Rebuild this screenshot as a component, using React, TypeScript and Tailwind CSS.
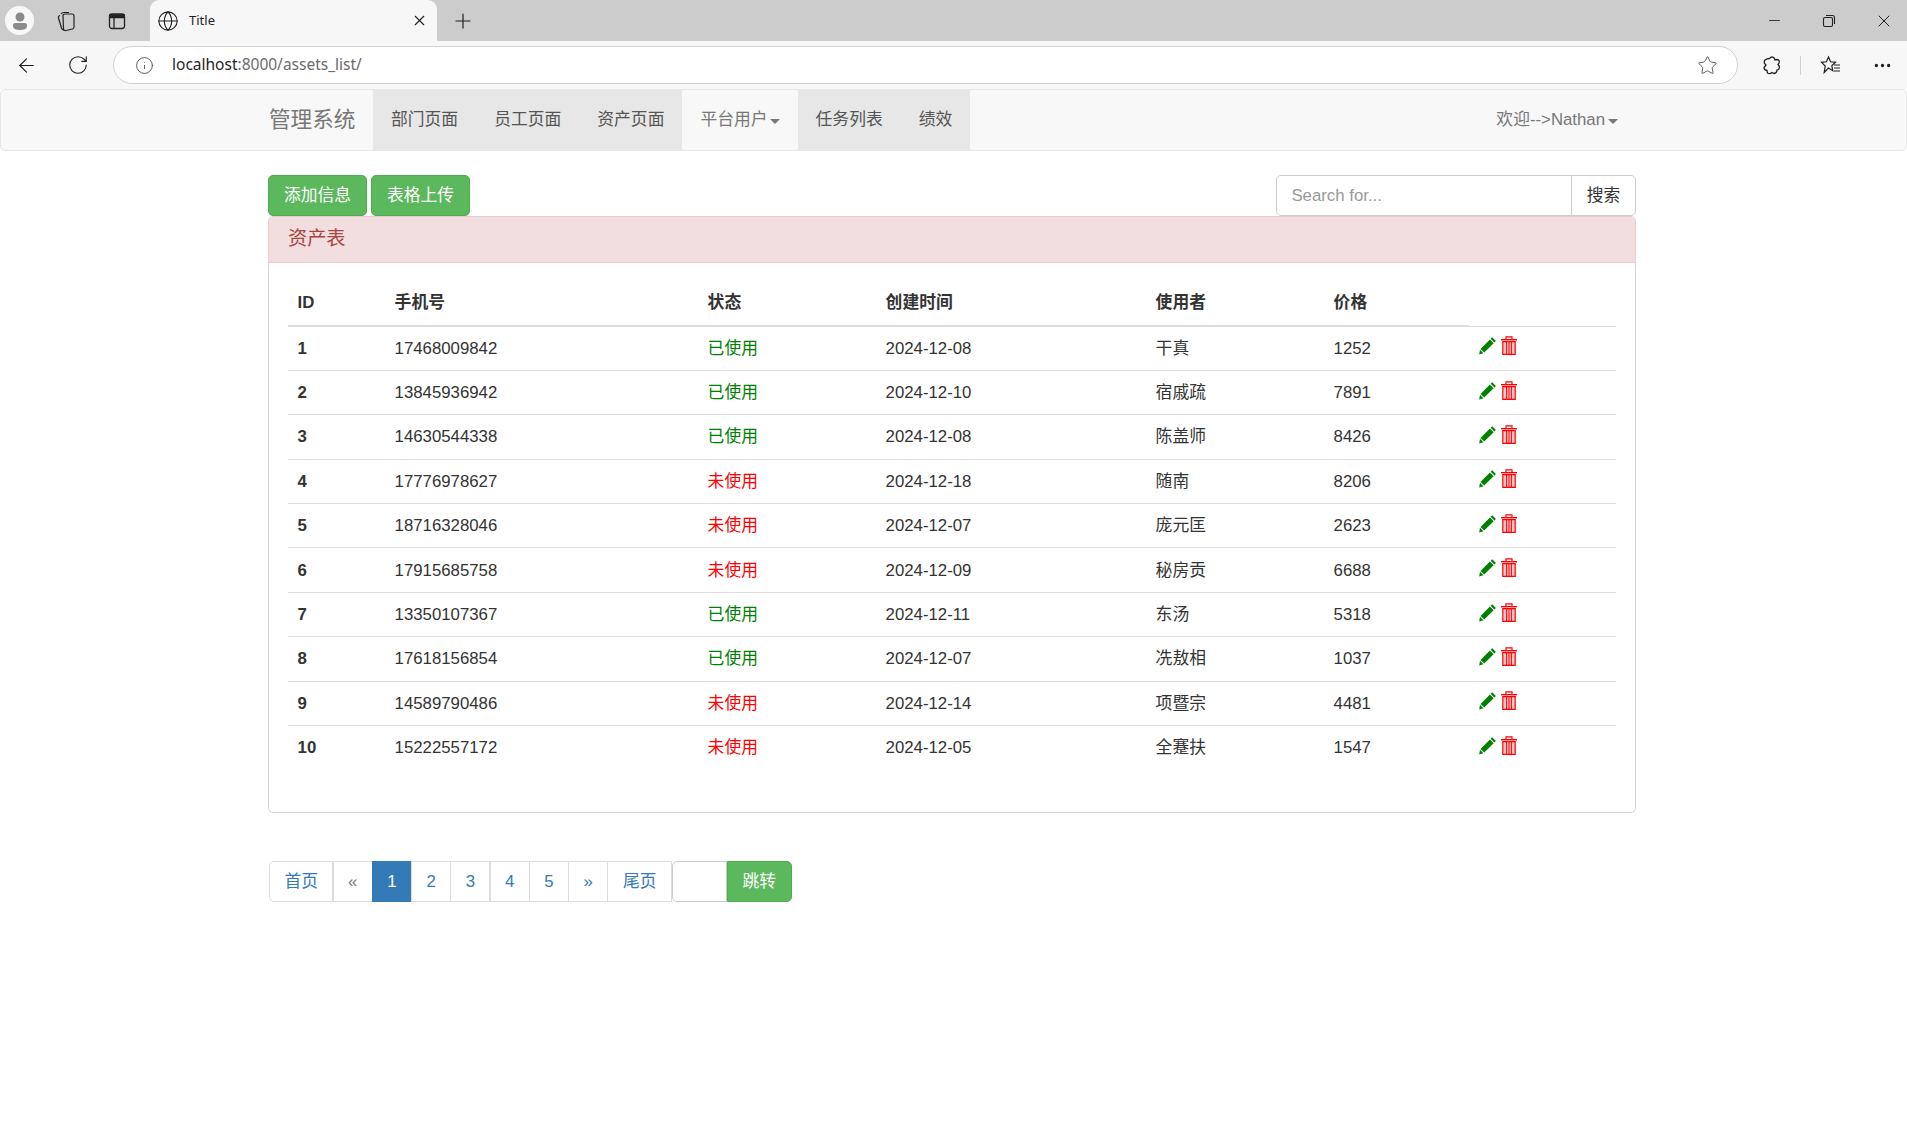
import React from 'react';
import { ArrowLeft, RotateCw, Info, Star, Plus, X, Minus, Globe, Ellipsis } from 'lucide-react';

const rows = [
  { id: 1, phone: '17468009842', used: true, date: '2024-12-08', user: '干真', price: 1252 },
  { id: 2, phone: '13845936942', used: true, date: '2024-12-10', user: '宿戚疏', price: 7891 },
  { id: 3, phone: '14630544338', used: true, date: '2024-12-08', user: '陈盖师', price: 8426 },
  { id: 4, phone: '17776978627', used: false, date: '2024-12-18', user: '随南', price: 8206 },
  { id: 5, phone: '18716328046', used: false, date: '2024-12-07', user: '庞元匡', price: 2623 },
  { id: 6, phone: '17915685758', used: false, date: '2024-12-09', user: '秘房贡', price: 6688 },
  { id: 7, phone: '13350107367', used: true, date: '2024-12-11', user: '东汤', price: 5318 },
  { id: 8, phone: '17618156854', used: true, date: '2024-12-07', user: '冼敖相', price: 1037 },
  { id: 9, phone: '14589790486', used: false, date: '2024-12-14', user: '项暨宗', price: 4481 },
  { id: 10, phone: '15222557172', used: false, date: '2024-12-05', user: '全蹇扶', price: 1547 },
];

function PencilIcon() {
  return (
    <svg width="18" height="19" viewBox="0 0 18 19" className="text-[#008000]">
      <path d="M13.2 1.2 L16.9 4.9 L15.4 6.4 L11.7 2.7 Z" fill="currentColor" />
      <path d="M10.9 3.5 L14.6 7.2 L5.2 16.6 L1.5 12.9 Z" fill="currentColor" />
      <path d="M1 13.8 L4.4 17.2 L0.2 18.4 Z" fill="currentColor" />
    </svg>
  );
}

function TrashIcon() {
  return (
    <svg width="16" height="19" viewBox="0 0 16 19" className="text-[#ff0000]">
      <path d="M5 3.5 V0.8 H11 V3.5" fill="none" stroke="currentColor" strokeWidth="1.2" />
      <rect x="0" y="3" width="16" height="1.4" fill="currentColor" />
      <path d="M1.8 5.6 H14.2 V18.4 H1.8 Z" fill="#ffc4c4" stroke="currentColor" strokeWidth="1.2" />
      <path d="M5.6 6 V18 M8 6 V18 M10.4 6 V18" stroke="currentColor" strokeWidth="1" />
    </svg>
  );
}

function BrowserBar() {
  return (
    <div className="font-['Noto_Sans',sans-serif]">
      <div className="flex h-[41px] items-center bg-[#cccccc] text-[#1f1f1f]">
        <div className="ml-[5px] flex h-[29px] w-[29px] items-center justify-center rounded-full bg-[#f7f7f7]">
          <svg width="18" height="20" viewBox="0 0 18 20">
            <circle cx="9" cy="6" r="4.5" fill="#8a8a8a" />
            <path d="M2 14 Q2 12 4.5 12 H13.5 Q16 12 16 14 V15 Q16 19 9 19 Q2 19 2 15 Z" fill="#8a8a8a" />
          </svg>
        </div>
        <svg width="22" height="22" viewBox="0 0 22 22" className="ml-[21px]" fill="none" stroke="#222" strokeWidth="1.2">
          <path d="M9 20 Q7 20 6.5 18 L3.5 8 Q3 6 5 5.5" />
          <path d="M6 4 Q7 2.5 9 2.5 H14" />
          <path d="M8 6 Q8 4 10 4 H17 Q19 4 19 6 V17 Q19 18.5 17.5 19 L11 20.5 Q8.5 21 8.5 18.5 Z" />
        </svg>
        <svg width="20" height="20" viewBox="0 0 20 20" className="ml-[30px]" fill="none" stroke="#222" strokeWidth="1.3">
          <rect x="2.5" y="3" width="15" height="14.5" rx="2.5" />
          <path d="M3 3.8 H17 V6.5 H3 Z" fill="#222" />
          <path d="M7 6.5 V17" />
        </svg>
        <div className="ml-[23px] flex h-[41px] w-[287px] items-center self-end rounded-t-[9px] bg-[#f7f7f7] pl-[7px] pr-[9px]">
          <Globe size={22} strokeWidth={1.2} />
          <span className="ml-[10px] flex-1 text-[13px]">Title</span>
          <X size={17} strokeWidth={1.5} />
        </div>
        <Plus size={24} strokeWidth={1.2} className="ml-[14px]" />
        <div className="ml-auto flex items-center">
          <Minus size={17} strokeWidth={1.2} className="mr-[39px]" />
          <svg width="14" height="14" viewBox="0 0 14 14" fill="none" stroke="#222" strokeWidth="1.1" className="mr-[38px]">
            <rect x="1.5" y="3.5" width="9" height="9" rx="1.5" />
            <path d="M4 1.5 H10.5 Q12.5 1.5 12.5 3.5 V10" />
          </svg>
          <X size={20} strokeWidth={1.2} className="mr-[13px]" />
        </div>
      </div>
      <div className="flex h-[48px] items-center bg-[#f7f7f7] text-[#1f1f1f]">
        <ArrowLeft size={23} strokeWidth={1.2} className="ml-[15px]" />
        <RotateCw size={22} strokeWidth={1.2} className="ml-[29px]" />
        <div className="ml-[24px] flex h-[38px] w-[1625px] items-center rounded-full border border-[#d2d2d2] bg-white pl-[21px] pr-[19px]">
          <Info size={19} strokeWidth={1.1} className="text-[#444]" />
          <span className="ml-[18px] flex-1 text-[15.5px]">
            localhost<span className="text-[#6b6b6b]">:8000/assets_list/</span>
          </span>
          <Star size={21} strokeWidth={1.1} className="text-[#555]" />
        </div>
        <svg width="20" height="20" viewBox="0 0 20 20" className="ml-[24px]" fill="none" stroke="#222" strokeWidth="1.3">
          <path d="M7.5 3.5 Q10 0.5 12.5 3.5 L13 5 L15 4.5 Q18 5 17 8 L16 9.5 Q18.5 12 16.5 14.5 L15 15 Q15 18 12 18.5 L10 17.5 Q8 19.5 5.5 18 L5 15.5 Q2 15 2 12.5 L4 10 Q1 7.5 3 5 Q5 3.5 7.5 3.5 Z" />
        </svg>
        <div className="ml-[18px] h-[19px] w-px bg-[#cfcfcf]" />
        <svg width="22" height="20" viewBox="0 0 22 20" className="ml-[19px]" fill="none" stroke="#222" strokeWidth="1.2">
          <path d="M8.5 2 L10.6 6.8 L15.5 7.3 L11.8 10.7 L12.8 15.7 L8.5 13 L4.2 17.5 L5.2 11 L1.5 7.3 L6.4 6.8 Z" />
          <path d="M14 10 H20 M14 13 H20 M14 16 H20" />
        </svg>
        <Ellipsis size={21} strokeWidth={1.8} className="ml-[30px]" />
      </div>
    </div>
  );
}

function App() {
  const navItem = 'flex items-center bg-[#e7e7e7] px-[18px]';
  const pageItem = 'flex items-center -ml-[0.85px] border-[1.2px] border-[#ddd] bg-white px-[14.4px] text-[#337ab7]';

  return (
    <div className="min-h-[1137px] overflow-hidden bg-white font-['Liberation_Sans','Noto_Sans_CJK_SC',sans-serif] text-[16.8px] text-[#333]">
      <BrowserBar />

      <div className="h-[62px] rounded-[5px] border-[1.2px] border-[#e7e7e7] bg-[#f8f8f8] text-[#555]">
        <div className="ml-[268px] flex h-full w-[1368px]">
          <div className="flex w-[104px] items-center text-[21.6px] text-[#777]">管理系统</div>
          <div className={navItem}>部门页面</div>
          <div className={navItem}>员工页面</div>
          <div className={navItem}>资产页面</div>
          <div className="flex items-center px-[18px] text-[#777]">
            平台用户
            <span className="ml-[2px] mt-[2px] border-x-[5px] border-t-[5px] border-x-transparent border-t-[#777]" />
          </div>
          <div className={navItem}>任务列表</div>
          <div className={navItem}>绩效</div>
          <div className="ml-auto flex items-center pr-[19px] text-[#777]">
            欢迎--&gt;Nathan
            <span className="ml-[3px] mt-[2px] border-x-[5px] border-t-[5px] border-x-transparent border-t-[#777]" />
          </div>
        </div>
      </div>

      <div className="ml-[268px] w-[1368px]">
        <div className="mt-[24px] flex h-[41px] items-stretch">
          <button className="w-[99px] rounded-[5px] border-[1.2px] border-[#4cae4c] bg-[#5cb85c] text-white">添加信息</button>
          <button className="ml-[4px] w-[99px] rounded-[5px] border-[1.2px] border-[#4cae4c] bg-[#5cb85c] text-white">表格上传</button>
          <div className="ml-auto flex w-[360px]">
            <input
              placeholder="Search for..."
              className="w-[296px] rounded-l-[5px] border-[1.2px] border-[#ccc] px-[14.4px] outline-none placeholder:text-[#999]"
            />
            <button className="-ml-px flex-1 rounded-r-[5px] border-[1.2px] border-[#ccc] bg-white">搜索</button>
          </div>
        </div>

        <div className="rounded-[5px] border-[1.2px] border-[#ebccd1]">
          <div className="flex h-[46px] items-center rounded-t-[4px] border-b-[1.2px] border-[#ebccd1] bg-[#f2dede] px-[19px] text-[19.2px] text-[#a94442]">
            资产表
          </div>
          <div className="px-[19px] pb-[42px] pt-[18px]">
            <table className="w-full table-fixed border-collapse">
              <colgroup>
                <col className="w-[97px]" />
                <col className="w-[313px]" />
                <col className="w-[178px]" />
                <col className="w-[270px]" />
                <col className="w-[178px]" />
                <col className="w-[145px]" />
                <col />
              </colgroup>
              <thead>
                <tr className="h-[45px] text-left">
                  {['ID', '手机号', '状态', '创建时间', '使用者', '价格'].map((title) => (
                    <th key={title} className="border-b-[2.4px] border-[#ddd] px-[9.6px] font-bold">
                      {title}
                    </th>
                  ))}
                  <th />
                </tr>
              </thead>
              <tbody>
                {rows.map((row) => (
                  <tr key={row.id} className="h-[44.4px] border-t-[1.2px] border-[#ddd]">
                    <td className="px-[9.6px] font-bold">{row.id}</td>
                    <td className="px-[9.6px]">{row.phone}</td>
                    <td className={row.used ? 'px-[9.6px] text-[#008000]' : 'px-[9.6px] text-[#ff0000]'}>
                      {row.used ? '已使用' : '未使用'}
                    </td>
                    <td className="px-[9.6px]">{row.date}</td>
                    <td className="px-[9.6px]">{row.user}</td>
                    <td className="px-[9.6px]">{row.price}</td>
                    <td className="px-[9.6px]">
                      <div className="flex items-center gap-[4px] pb-[5px]">
                        <PencilIcon />
                        <TrashIcon />
                      </div>
                    </td>
                  </tr>
                ))}
              </tbody>
            </table>
          </div>
        </div>

        <div className="ml-px mt-[48px] flex h-[41px]">
          <a className={`${pageItem} ml-0 rounded-l-[5px]`}>首页</a>
          <a className={`${pageItem} text-[#777]`}>«</a>
          <a className="-ml-[0.85px] flex items-center border-[1.2px] border-[#337ab7] bg-[#337ab7] px-[14.4px] text-white">1</a>
          <a className={pageItem}>2</a>
          <a className={pageItem}>3</a>
          <a className={pageItem}>4</a>
          <a className={pageItem}>5</a>
          <a className={pageItem}>»</a>
          <a className={pageItem}>尾页</a>
          <input className="w-[55px] rounded-l-[5px] border-[1.2px] border-[#ccc] outline-none" />
          <button className="w-[65px] rounded-r-[5px] border-[1.2px] border-[#4cae4c] bg-[#5cb85c] text-white">跳转</button>
        </div>
      </div>
    </div>
  );
}

export default App;
